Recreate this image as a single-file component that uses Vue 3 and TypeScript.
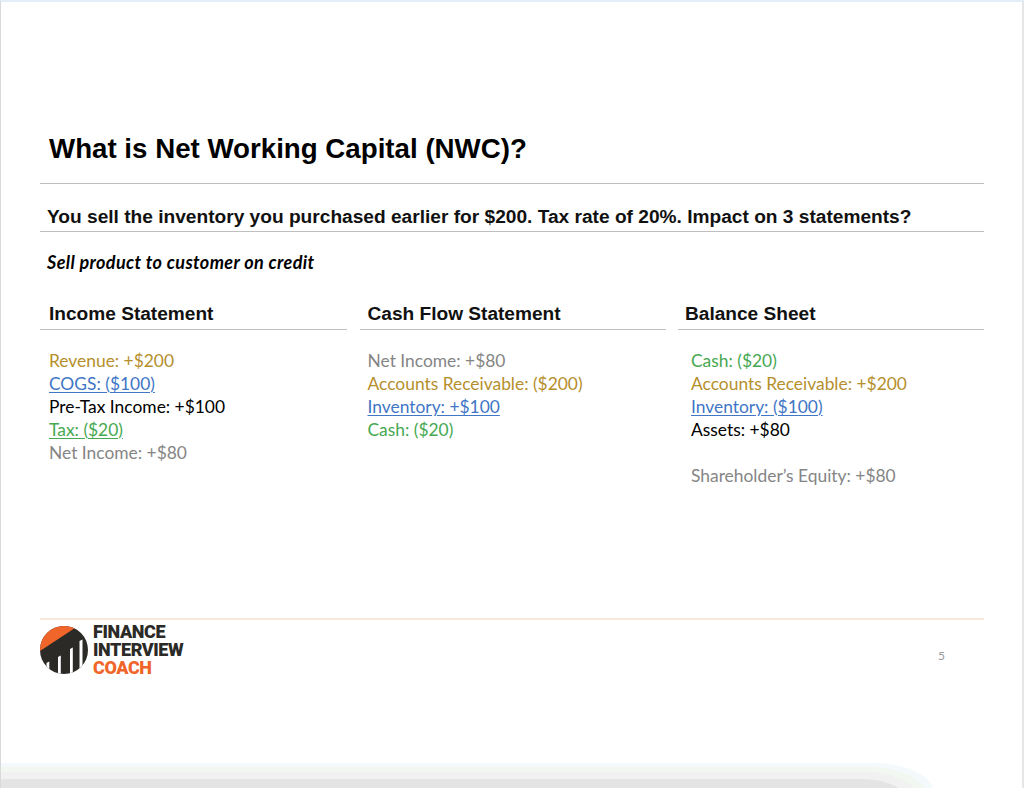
<script setup lang="ts">
interface Line { text: string; tone: string; linked?: boolean; gap?: boolean }
interface Column { title: string; lines: Line[] }

const columns: Column[] = [
  {
    title: 'Income Statement',
    lines: [
      { text: 'Revenue: +$200', tone: 'gold' },
      { text: 'COGS: ($100)', tone: 'blue', linked: true },
      { text: 'Pre-Tax Income: +$100', tone: 'black' },
      { text: 'Tax: ($20)', tone: 'green', linked: true },
      { text: 'Net Income: +$80', tone: 'grey' },
    ],
  },
  {
    title: 'Cash Flow Statement',
    lines: [
      { text: 'Net Income: +$80', tone: 'grey' },
      { text: 'Accounts Receivable: ($200)', tone: 'gold' },
      { text: 'Inventory: +$100', tone: 'blue', linked: true },
      { text: 'Cash: ($20)', tone: 'green' },
    ],
  },
  {
    title: 'Balance Sheet',
    lines: [
      { text: 'Cash: ($20)', tone: 'green' },
      { text: 'Accounts Receivable: +$200', tone: 'gold' },
      { text: 'Inventory: ($100)', tone: 'blue', linked: true },
      { text: 'Assets: +$80', tone: 'black' },
      { text: 'Shareholder’s Equity: +$80', tone: 'grey', gap: true },
    ],
  },
]
</script>

<template>
  <div class="slide">
    <header class="title-block">
      <h1 class="title">What is Net Working Capital (NWC)?</h1>
    </header>
    <h2 class="question">You sell the inventory you purchased earlier for $200. Tax rate of 20%. Impact on 3 statements?</h2>
    <p class="scenario">Sell product to customer on credit</p>

    <section class="columns">
      <div v-for="(col, i) in columns" :key="col.title" class="column" :class="`column-${i}`">
        <h3 class="column-title">{{ col.title }}</h3>
        <ul class="lines">
          <li
            v-for="line in col.lines"
            :key="line.text"
            :class="[line.tone, { gap: line.gap }]"
          >
            <span :class="{ linked: line.linked }">{{ line.text }}</span>
          </li>
        </ul>
      </div>
    </section>

    <footer class="footer">
      <div class="brand">
        <svg class="mark" viewBox="0 0 48 48" width="48" height="48" aria-hidden="true">
          <defs>
            <clipPath id="disc"><circle cx="24" cy="24" r="24" /></clipPath>
          </defs>
          <g clip-path="url(#disc)">
            <rect width="48" height="48" fill="#2b2a27" />
            <path d="M0 0H38L0 25Z" fill="#f0652a" />
            <path d="M6.500 48V37l2.800-1.500V48ZM18 48V31l2.800-1.500V48ZM30 48V23l2.800-1.500V48ZM39.500 48V15l3-1.500V48Z" fill="#fff" />
          </g>
        </svg>
        <div class="wordmark">
          <span>FINANCE</span>
          <span>INTERVIEW</span>
          <span class="accent">COACH</span>
        </div>
      </div>
      <span class="page-no">5</span>
    </footer>

    <div class="shadow" aria-hidden="true">
      <div class="band band-1"><div class="band band-2"><div class="band band-3"><div class="band band-4"></div></div></div></div>
    </div>
  </div>
</template>

<style>
html, body { margin: 0; background: #fff; }
</style>

<style scoped>
.slide {
  position: relative;
  box-sizing: border-box;
  width: 1024px;
  height: 788px;
  overflow: hidden;
  padding: 0 38px 0 39px;
  background: #fff;
  border-top: 2px solid #e3eefa;
  border-left: 1px solid #d9d9d9;
  border-right: 2px solid #e6e6e6;
  font-family: Lato, "Open Sans", sans-serif;
  display: flex;
  flex-direction: column;
}
.title-block {
  height: 182px;
  box-sizing: border-box;
  padding: 131px 0 0 9px;
  border-bottom: 1px solid #bfbfbf;
}
.title {
  margin: 0;
  font: 700 27.700px/32px "Liberation Sans", Arial, sans-serif;
  color: #000;
}
.question {
  margin: 0;
  height: 48px;
  box-sizing: border-box;
  padding: 21px 0 0 7px;
  border-bottom: 1px solid #bfbfbf;
  font: 700 19.140px/24px "Liberation Sans", Arial, sans-serif;
  color: #111;
}
.scenario {
  margin: 19px 0 0 7px;
  font: italic 700 18px/22px Lato, sans-serif;
  letter-spacing: 0.380px;
  color: #000;
}
.columns {
  display: grid;
  grid-template-columns: 307px 306px 306px;
  column-gap: 12.500px;
  margin-top: 30px;
}
.column-title {
  margin: 0;
  height: 27px;
  box-sizing: border-box;
  padding-left: 9px;
  border-bottom: 1px solid #bfbfbf;
  font: 700 19.100px/21px "Liberation Sans", Arial, sans-serif;
  color: #111;
}
.column-1 .column-title { padding-left: 8px; }
.column-2 .column-title { padding-left: 7px; }
.lines {
  list-style: none;
  margin: 19px 0 0;
  padding: 0 0 0 9px;
  font-size: 17.400px;
  line-height: 23px;
}
.column-1 .lines { padding-left: 8px; }
.column-2 .lines { padding-left: 13px; }
.gap { margin-top: 23px; }
.linked { text-decoration: underline; text-underline-offset: 2px; }
.gold { color: #b58f2c; }
.blue { color: #3f76c6; }
.black { color: #000; }
.green { color: #46a852; }
.grey { color: #858585; }
.footer {
  position: absolute;
  left: 39px;
  right: 38px;
  top: 616px;
  height: 70px;
  border-top: 2px solid #f9e8dc;
  display: flex;
  justify-content: space-between;
}
.brand { display: flex; align-items: center; gap: 5px; padding-top: 5px; height: 50px; }
.wordmark {
  display: flex;
  flex-direction: column;
  font: 900 18px/18px Roboto, sans-serif;
  letter-spacing: -0.400px;
  color: #2b2a27;
}
.accent { color: #f0652a; }
.page-no {
  margin: 28px 39px 0 0;
  font-size: 12px;
  line-height: 16px;
  color: #999;
}
.shadow {
  position: absolute;
  left: 0;
  bottom: 0;
  width: 935px;
  height: 25px;
  overflow: hidden;
}
.band { box-sizing: border-box; }
.band-1 { background: #f4fafc; border-top-right-radius: 60px 30px; width: 933px; height: 70px; padding-top: 4px; }
.band-2 { background: #f3f7f2; border-top-right-radius: 56px 28px; width: 925px; height: 70px; padding-top: 5px; }
.band-3 { background: #f1f1f1; border-top-right-radius: 52px 26px; width: 917px; height: 70px; padding-top: 7px; }
.band-4 { background: #e4e4e4; border-top-right-radius: 48px 24px; width: 908px; height: 70px; }
</style>
